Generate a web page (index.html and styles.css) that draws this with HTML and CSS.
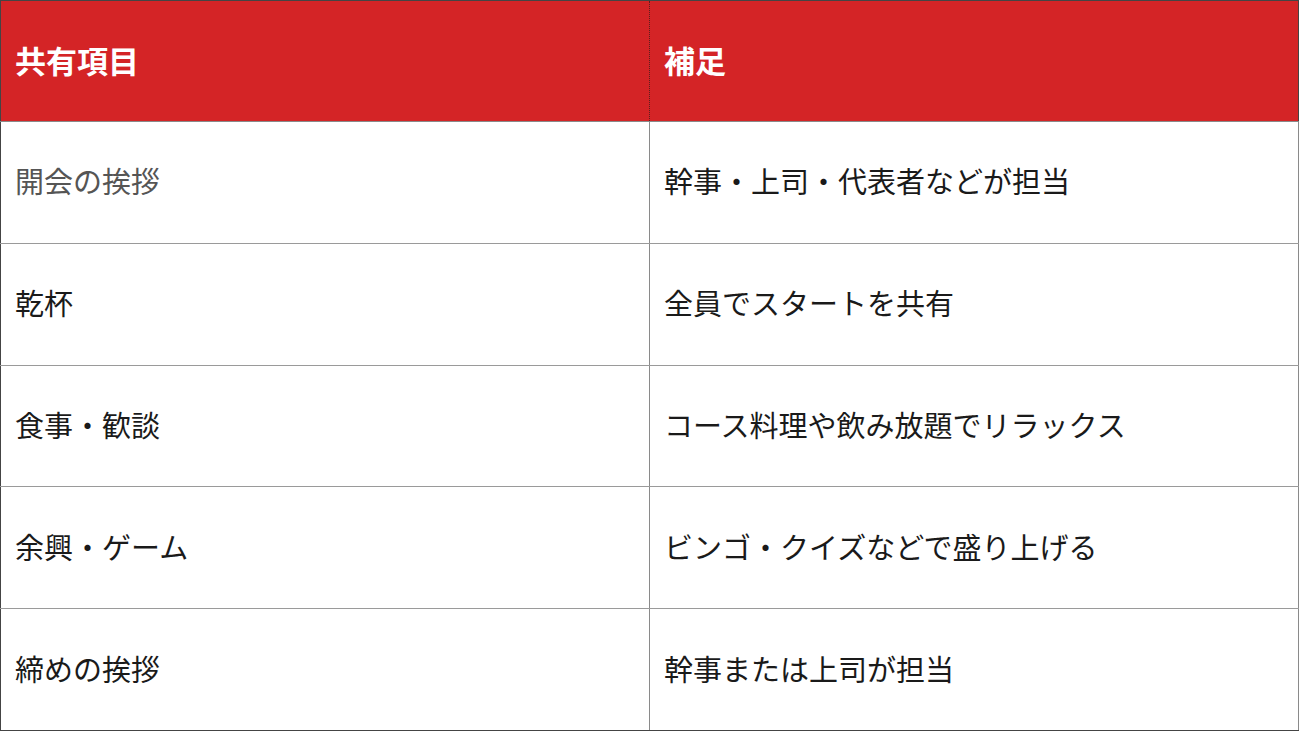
FILE: index.html
```html
<!DOCTYPE html>
<html lang="ja">
<head>
<meta charset="utf-8">
<link rel="stylesheet" href="styles.css">
</head>
<body>
<table class="tbl">
  <thead>
    <tr><th class="c1">共有項目</th><th class="c2">補足</th></tr>
  </thead>
  <tbody>
    <tr><td class="muted">開会の挨拶</td><td>幹事・上司・代表者などが担当</td></tr>
    <tr><td>乾杯</td><td>全員でスタートを共有</td></tr>
    <tr><td>食事・歓談</td><td>コース料理や飲み放題でリラックス</td></tr>
    <tr><td>余興・ゲーム</td><td>ビンゴ・クイズなどで盛り上げる</td></tr>
    <tr><td>締めの挨拶</td><td>幹事または上司が担当</td></tr>
  </tbody>
</table>
</body>
</html>
```
FILE: styles.css
```css
html, body {
  margin: 0;
  padding: 0;
  background: #fff;
}
.tbl {
  width: 1299px;
  height: 731px;
  border-collapse: collapse;
  table-layout: fixed;
  font-family: "Noto Sans CJK JP", "Noto Sans", sans-serif;
  border: 1px solid #444;
}
.tbl th {
  background: #d42426;
  color: #fff;
  font-weight: 700;
  font-size: 31px;
  text-align: left;
  padding: 0 0 4px 14px;
  height: 121px;
  box-sizing: border-box;
  border-bottom: 1px solid #8a8a8a;
}
.tbl th.c1 {
  width: 649px;
  border-right: 1px dotted #5a2020;
}
.tbl td {
  font-size: 29px;
  color: #1a1a1a;
  padding: 0 0 4px 14px;
  height: 120px;
  box-sizing: border-box;
  border-bottom: 1px solid #9a9a9a;
  border-right: 1px solid #8a8a8a;
  vertical-align: middle;
}
.tbl td.muted {
  color: #555;
}
.tbl tr:last-child td {
  border-bottom: 1px solid #444;
}
```
